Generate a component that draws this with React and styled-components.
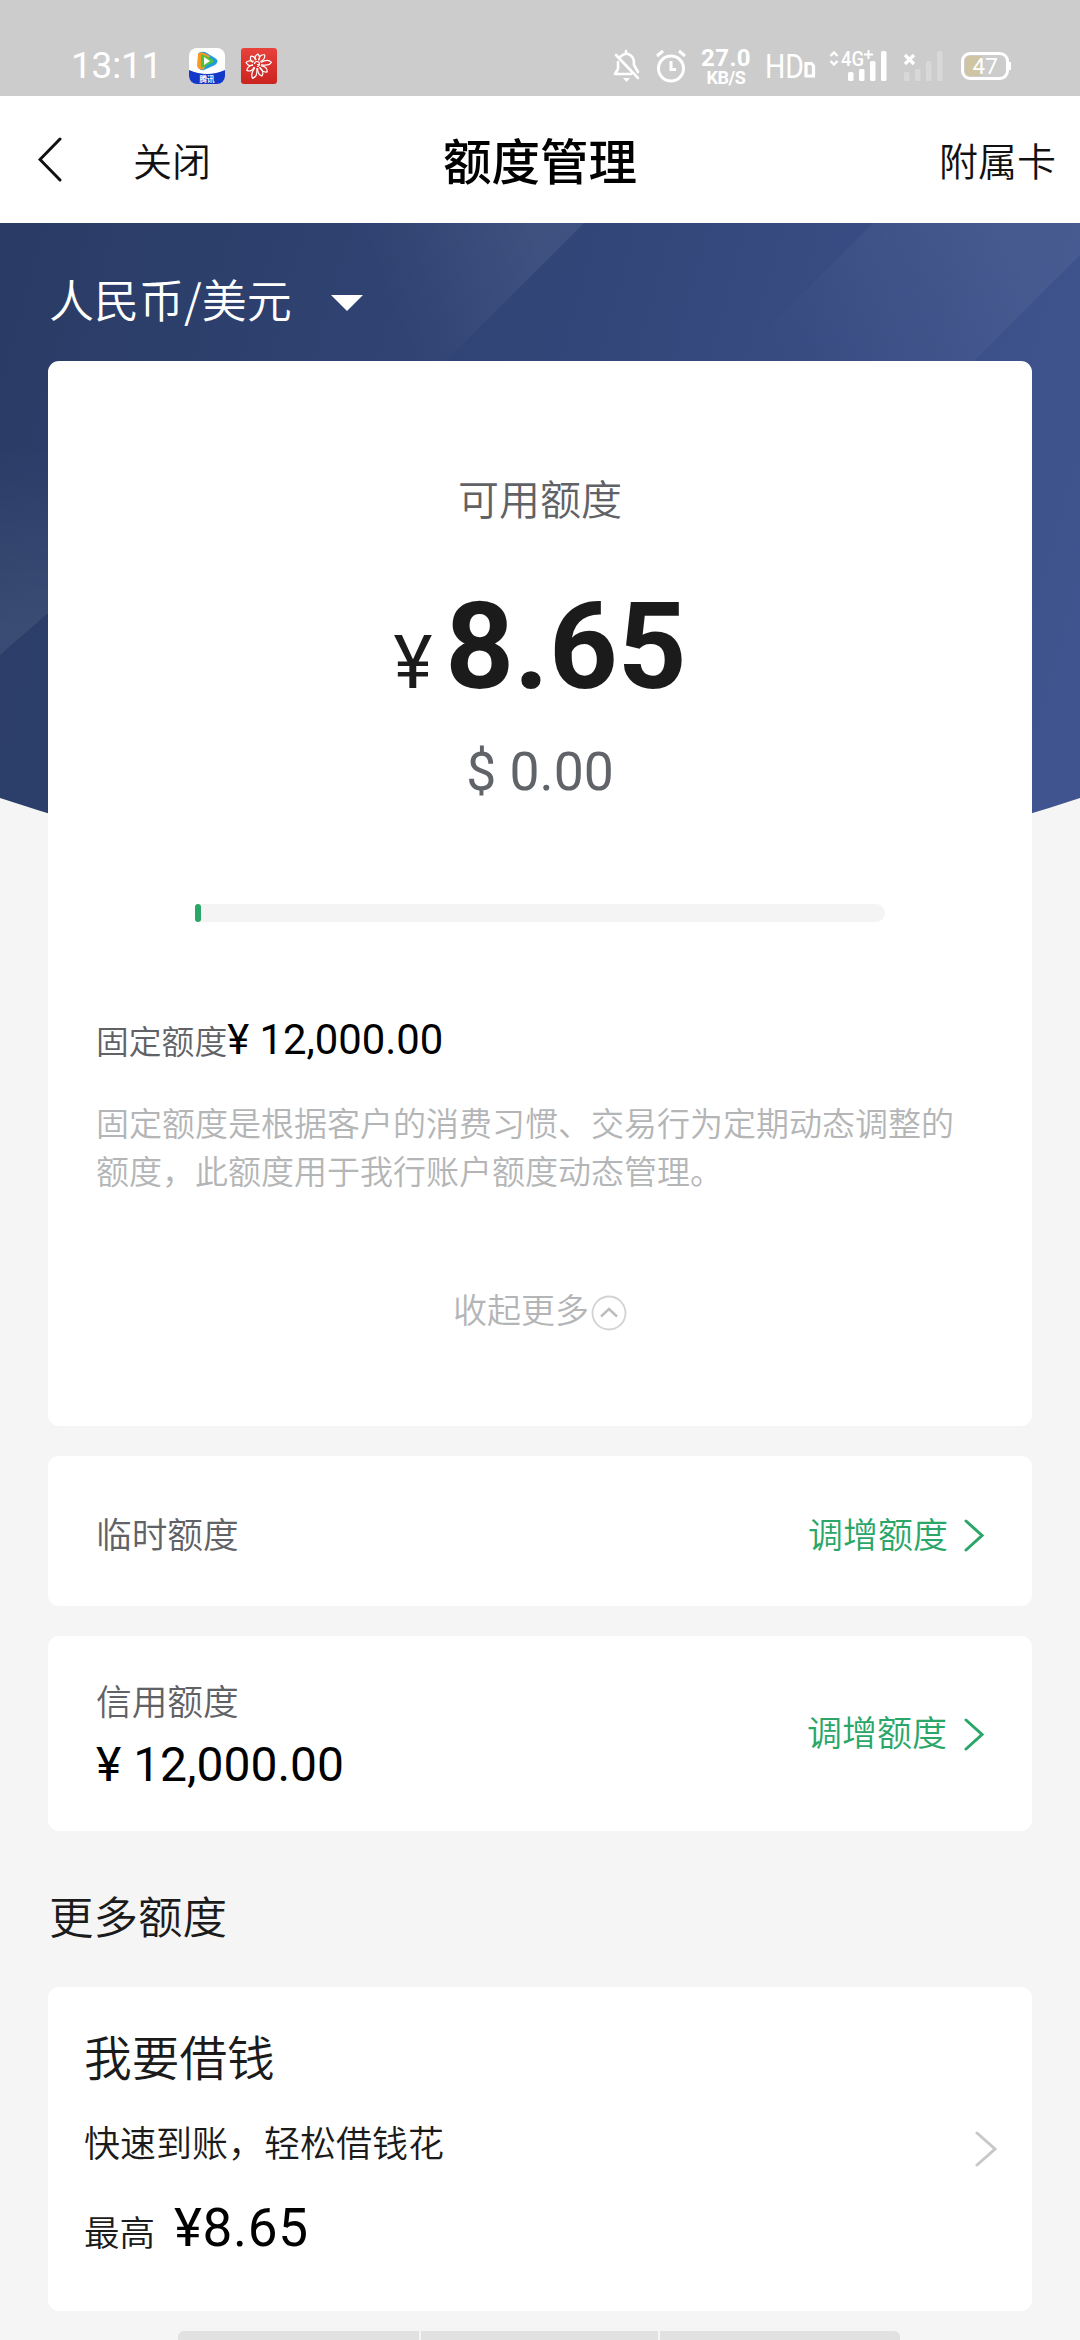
import React from "react";
import styled, { createGlobalStyle } from "styled-components";

const GlobalStyle = createGlobalStyle`
  * {
    box-sizing: border-box;
    margin: 0;
    padding: 0;
  }

  body {
    background: #f5f5f5;
    font-family: "Noto Sans CJK SC", sans-serif;
    font-weight: 350;
    color: #1b1b1b;
  }
`;

const Page = styled.div`
  width: 1080px;
  height: 2340px;
  overflow: hidden;
  display: flex;
  flex-direction: column;
  background: #f5f5f5;
`;

const StatusBar = styled.div`
  height: 96px;
  flex: none;
  padding: 48px 69px 0 71px;
  display: flex;
  justify-content: space-between;
  background: #cccccc;
  color: #fff;
  font-family: Roboto, sans-serif;
  font-weight: 400;

  svg {
    display: block;
    overflow: visible;
  }
`;

const StatusGroup = styled.div`
  display: flex;
  height: 36px;
`;

const Clock = styled.span`
  width: 118px;
  font-size: 37px;
  line-height: 36px;
  letter-spacing: -0.2px;
`;

const AppIcons = styled.div`
  display: flex;
  gap: 16px;
`;

const NavBar = styled.div`
  height: 127px;
  flex: none;
  padding: 0 24px 2px;
  display: grid;
  grid-template-columns: 1fr auto 1fr;
  align-items: center;
  background: #fff;
`;

const NavLeft = styled.div`
  padding-left: 14px;
  display: flex;
  align-items: center;
  gap: 71px;

  svg {
    margin-top: 2px;
  }
`;

const NavText = styled.span`
  font-size: 39px;
  line-height: 56px;
  color: #111;
  text-align: ${(props) => props.$align || "left"};
`;

const NavTitle = styled.h1`
  font-size: 48.5px;
  line-height: 60px;
  font-weight: 500;
  color: #000;
`;

const Content = styled.div`
  position: relative;
  flex: 1;
  padding: 0 48px;
  display: flex;
  flex-direction: column;
`;

const Backdrop = styled.svg`
  position: absolute;
  left: 0;
  top: 0;
`;

const Currency = styled.div`
  position: relative;
  height: 138px;
  padding-top: 21px;
  padding-left: 1px;
  display: flex;
  align-items: flex-start;
  gap: 39px;
  color: #fff;
  font-size: 45px;
  line-height: 110px;
`;

const Caret = styled.span`
  margin-top: 51px;
  border: 16px solid transparent;
  border-top-color: #fff;
  border-bottom: 0;
`;

const Card = styled.section`
  position: relative;
  flex: none;
  height: ${(props) => props.$height}px;
  margin-bottom: ${(props) => props.$gap || 0}px;
  padding: ${(props) => props.$padding || "0 48px"};
  border-radius: 11px;
  background: #fff;
`;

const Summary = styled.div`
  display: flex;
  flex-direction: column;
  align-items: center;
`;

const SummaryLabel = styled.div`
  font-size: 41px;
  line-height: 60px;
  color: #606266;
`;

const Balance = styled.div`
  margin-top: 50px;
  display: flex;
  align-items: baseline;
  gap: 13px;
  font-family: Roboto, sans-serif;
  font-size: 120px;
  font-weight: 700;
  line-height: 140px;

  small {
    font-size: 74px;
    font-weight: 400;
  }
`;

const Dollars = styled.div`
  margin-top: 4px;
  font-family: Roboto, sans-serif;
  font-size: 53.5px;
  font-weight: 400;
  line-height: 70px;
  color: #606469;
`;

const Track = styled.div`
  width: 690px;
  height: 18px;
  margin-top: 97px;
  border-radius: 3px 9px 9px 3px;
  background: #f4f4f4;
`;

const Fill = styled.div`
  height: 100%;
  border-radius: 3px;
  background: #2aa768;
`;

const Fixed = styled.div`
  margin-top: 88px;
  display: flex;
  align-items: baseline;
  font-size: 32.8px;
  line-height: 60px;
  color: #606266;
`;

const Money = styled.span`
  font-family: Roboto, sans-serif;
  font-size: ${(props) => props.$size}px;
  font-weight: 400;
  letter-spacing: ${(props) => props.$spacing || 0}px;
  color: #000;
`;

const Note = styled.p`
  margin-top: 28px;
  font-size: 33px;
  line-height: 48px;
  color: #b4b5b6;
  white-space: pre-line;
`;

const Collapse = styled.div`
  margin-top: 90px;
  display: flex;
  justify-content: center;
  align-items: center;
  gap: 2px;
  font-size: 34px;
  line-height: 50px;
  color: #b4b5b6;

  svg {
    margin-top: 7px;
  }
`;

const Row = styled.div`
  height: 100%;
  padding-top: ${(props) => props.$drop || 0}px;
  display: flex;
  justify-content: space-between;
  align-items: center;
`;

const RowLabel = styled.div`
  font-size: 35.7px;
  line-height: 54px;
  color: #606266;
`;

const Amount = styled.div`
  padding-top: 8px;
  line-height: 60px;
`;

const Action = styled.div`
  margin-bottom: ${(props) => props.$lift || 0}px;
  display: flex;
  align-items: center;
  gap: ${(props) => props.$gap}px;
  font-size: 35px;
  line-height: 54px;
  color: #2aa768;

  svg {
    margin-top: 6px;
  }
`;

const SectionTitle = styled.h2`
  height: 156px;
  padding: 51px 0 0 1px;
  font-size: 44.5px;
  line-height: 66px;
  font-weight: 350;
`;

const LoanInfo = styled.div`
  height: 100%;
  padding-top: 34px;
`;

const LoanTitle = styled.h3`
  font-size: 47.7px;
  line-height: 70px;
  font-weight: 350;
`;

const LoanText = styled.div`
  margin-top: 23px;
  font-size: 36px;
  line-height: 54px;
`;

const LoanMax = styled.div`
  margin-top: 28px;
  display: flex;
  align-items: baseline;
  gap: 19px;
  font-size: 35.5px;
  line-height: 64px;
`;

const BottomTabs = styled.div`
  width: 722px;
  height: 9px;
  margin: 20px 0 0 130px;
  display: grid;
  grid-template-columns: 241px 237px 1fr;
  gap: 2px;
`;

const BottomTab = styled.div`
  background: #e1e1e1;

  &:first-child {
    border-top-left-radius: 6px;
  }

  &:last-child {
    border-top-right-radius: 6px;
  }
`;

const Chevron = ({ width, height, color, stroke = 3, left }) => (
  <svg width={width} height={height} viewBox={`0 0 ${width} ${height}`} fill="none">
    <path
      d={
        left
          ? `M${width - 2} 2L2 ${height / 2}L${width - 2} ${height - 2}`
          : `M2 2L${width - 2} ${height / 2}L2 ${height - 2}`
      }
      stroke={color}
      strokeWidth={stroke}
      strokeLinecap="round"
    />
  </svg>
);

const VideoIcon = () => (
  <svg width="36" height="36" viewBox="0 0 36 36">
    <defs>
      <clipPath id="tile">
        <rect width="36" height="36" rx="8" />
      </clipPath>
    </defs>
    <g clipPath="url(#tile)">
      <rect width="36" height="36" fill="#fff" />
      <path d="M0 22Q18 30 36 22V36H0Z" fill="#1238c8" />
      <path d="M9 6Q11 3 16 4L26 10Q31 13 26 17L15 22Q10 23 9 18Z" fill="#1f9be0" />
      <path d="M9 6Q11 3 15 5L21 8L15 21Q10 23 8 18Z" fill="#f59a23" />
      <path d="M12 6L23 11Q26 13 23 15L12 20Z" fill="#4fc23c" />
      <path d="M15 9L21 13L15 17Z" fill="#fff" />
    </g>
    <text x="18" y="34" fontSize="7.5" fontWeight="700" fill="#fff" textAnchor="middle" fontFamily="Noto Sans CJK SC">
      腾讯
    </text>
  </svg>
);

const FlowerIcon = () => (
  <svg width="36" height="36" viewBox="0 0 36 36" fill="none">
    <defs>
      <linearGradient id="red" x1="0" y1="0" x2="0" y2="1">
        <stop offset="0" stopColor="#e8423c" />
        <stop offset="1" stopColor="#cb231f" />
      </linearGradient>
    </defs>
    <rect width="36" height="36" rx="3" fill="url(#red)" />
    <g stroke="#fff" strokeWidth="1.2" strokeLinejoin="round" transform="translate(16 16)">
      {[
        [5, 10],
        [40, 12],
        [84, 14.5],
        [128, 13],
        [158, 13],
        [197, 15],
        [238, 12],
        [278, 11],
        [322, 10],
      ].map(([angle, length]) => (
        <path key={angle} d={`M-1 -4Q-4.500 ${-length + 3} 0 ${-length}Q3.500 ${-length + 3} 1 -4`} transform={`rotate(${angle})`} />
      ))}
      <path d="M-2.500 0A2.500 2.500 0 1 1 0 2.500M0 0.500H2.500" />
    </g>
  </svg>
);

const Speed = styled.div`
  width: 50px;
  margin: 0 12px 0 2px;
  display: flex;
  flex-direction: column;
  align-items: center;
  font-weight: 700;
`;

const SpeedValue = styled.span`
  height: 20px;
  font-size: 24px;
  line-height: 20px;
  letter-spacing: 0.4px;
`;

const SpeedUnit = styled.span`
  height: 16px;
  font-size: 18px;
  line-height: 19px;
  letter-spacing: -0.4px;
`;

const AlertIcons = () => (
  <svg width="88" height="38" viewBox="0 0 88 38" fill="none" stroke="#fff">
    <g strokeWidth="2.6" strokeLinejoin="round" strokeLinecap="round">
      <path d="M9 9Q16 2 22 10Q23 12 23 17L27 24M20 26H4L7 21V14" />
      <path d="M5 7L27 30" />
      <path d="M15 3V5" />
    </g>
    <path d="M12 30H19L15.500 34Z" fill="#fff" stroke="none" />
    <circle cx="60" cy="20.500" r="12.500" strokeWidth="3" />
    <path d="M46 8L52 3M74 8L68 3" strokeWidth="3" />
    <path d="M60 13V21.500H65" strokeWidth="3" />
  </svg>
);

// HD mark, both SIM signals and the battery
const SignalIcons = () => (
  <svg width="248" height="38" viewBox="152 0 248 38" fill="none" stroke="#fff">
    <g fill="#fff" stroke="none" fontFamily="Roboto">
      <text x="154" y="30" fontSize="34" textLength="39" lengthAdjust="spacingAndGlyphs">HD</text>
      <text x="230" y="18" fontSize="21" fontWeight="500" textLength="23" lengthAdjust="spacingAndGlyphs">4G</text>
    </g>
    <path d="M257.500 2V11M253 6.500H262" strokeWidth="2" />
    <path d="M195 15.500H200.500L202.500 18V28H195Z" strokeWidth="3.200" />
    <path d="M219.500 8L223 4.500L226.500 8M219.500 13L223 16.500L226.500 13" strokeWidth="2.400" />
    <g fill="#fff" stroke="none">
      <rect x="237" y="24" width="5.500" height="9" rx="1.500" />
      <rect x="248" y="21" width="5.500" height="12" rx="1.500" />
      <rect x="259" y="13" width="5.500" height="20" rx="1.500" />
      <rect x="270" y="3" width="5.500" height="30" rx="1.500" />
    </g>
    <path d="M294 7L303 16M303 7L294 16" strokeWidth="3.200" />
    <g fill="#d8d8d8" stroke="none">
      <rect x="293" y="24" width="5.500" height="9" rx="1.500" />
      <rect x="304" y="21" width="5.500" height="12" rx="1.500" />
      <rect x="315" y="13" width="5.500" height="20" rx="1.500" />
      <rect x="326" y="3" width="5.500" height="30" rx="1.500" />
    </g>
    <path d="M359 8H371V28H359Q354 28 354 23V13Q354 8 359 8Z" fill="#cfc5a3" stroke="none" />
    <rect x="351.500" y="5.500" width="45" height="25" rx="7.500" strokeWidth="3" />
    <path d="M399 14V22" strokeWidth="2" />
    <text x="361.500" y="25.500" fontSize="22.500" fill="#fff" stroke="none" fontFamily="Roboto">47</text>
  </svg>
);

const HeroArt = () => (
  <Backdrop width="1080" height="620" viewBox="0 0 1080 620">
    <defs>
      <linearGradient id="base" gradientUnits="userSpaceOnUse" x1="0" y1="100" x2="1080" y2="400">
        <stop offset="0" stopColor="#2a3c65" />
        <stop offset="0.500" stopColor="#324679" />
        <stop offset="1" stopColor="#40548f" />
      </linearGradient>
      <linearGradient id="stripeA" gradientUnits="userSpaceOnUse" x1="380" y1="60" x2="530" y2="0">
        <stop offset="0" stopColor="#fff" stopOpacity="0" />
        <stop offset="1" stopColor="#fff" stopOpacity="0.065" />
      </linearGradient>
      <linearGradient id="stripeB" gradientUnits="userSpaceOnUse" x1="800" y1="160" x2="980" y2="0">
        <stop offset="0" stopColor="#fff" stopOpacity="0" />
        <stop offset="1" stopColor="#fff" stopOpacity="0.055" />
      </linearGradient>
      <linearGradient id="stripeC" gradientUnits="userSpaceOnUse" x1="0" y1="220" x2="0" y2="400">
        <stop offset="0" stopColor="#fff" stopOpacity="0" />
        <stop offset="1" stopColor="#fff" stopOpacity="0.070" />
      </linearGradient>
      <clipPath id="arc">
        <path d="M0 0H1080V575Q540 755 0 575Z" />
      </clipPath>
    </defs>
    <g clipPath="url(#arc)">
      <rect width="1080" height="620" fill="url(#base)" />
      <path d="M330 0H584L446 138H192Z" fill="url(#stripeA)" />
      <path d="M873 0H1080V32L974 138H735Z" fill="url(#stripeB)" />
      <path d="M0 220H48V390L0 432Z" fill="url(#stripeC)" />
    </g>
  </Backdrop>
);

const App = () => {
  return (
    <>
      <GlobalStyle />
      <Page>
        <StatusBar>
          <StatusGroup>
            <Clock>13:11</Clock>
            <AppIcons>
              <VideoIcon />
              <FlowerIcon />
            </AppIcons>
          </StatusGroup>
          <StatusGroup>
            <AlertIcons />
            <Speed>
              <SpeedValue>27.0</SpeedValue>
              <SpeedUnit>KB/S</SpeedUnit>
            </Speed>
            <SignalIcons />
          </StatusGroup>
        </StatusBar>
        <NavBar>
          <NavLeft>
            <Chevron width={24} height={45} color="#111" stroke={3} left />
            <NavText>关闭</NavText>
          </NavLeft>
          <NavTitle>额度管理</NavTitle>
          <NavText $align="right">附属卡</NavText>
        </NavBar>
        <Content>
          <HeroArt />
          <Currency>
            人民币/美元
            <Caret />
          </Currency>
          <Card $height={1065} $gap={30} $padding="106px 48px 0">
            <Summary>
              <SummaryLabel>可用额度</SummaryLabel>
              <Balance>
                <small>¥</small>8.65
              </Balance>
              <Dollars>$ 0.00</Dollars>
              <Track>
                <Fill style={{ width: `${(8.65 / 12000) * 100 + 0.8}%` }} />
              </Track>
            </Summary>
            <Fixed>
              固定额度<Money $size={41.8}>¥ 12,000.00</Money>
            </Fixed>
            <Note>
              {"固定额度是根据客户的消费习惯、交易行为定期动态调整的\n额度，此额度用于我行账户额度动态管理。"}
            </Note>
            <Collapse>
              收起更多
              <svg width="36" height="36" viewBox="0 0 36 36" fill="none">
                <circle cx="18" cy="18" r="16.500" stroke="#d3d3d3" strokeWidth="1.800" />
                <path d="M10 21.500L18 14L26 21.500" stroke="#bdbdbd" strokeWidth="2.400" />
              </svg>
            </Collapse>
          </Card>
          <Card $height={150} $gap={30}>
            <Row $drop={3}>
              <RowLabel>临时额度</RowLabel>
              <Action $gap={16}>
                调增额度
                <Chevron width={20} height={33} color="#2aa768" />
              </Action>
            </Row>
          </Card>
          <Card $height={195}>
            <Row $drop={9}>
              <div>
                <RowLabel>信用额度</RowLabel>
                <Amount>
                  <Money $size={48}>¥ 12,000.00</Money>
                </Amount>
              </div>
              <Action $gap={17} $lift={14}>
                调增额度
                <Chevron width={20} height={33} color="#2aa768" />
              </Action>
            </Row>
          </Card>
          <SectionTitle>更多额度</SectionTitle>
          <Card $height={324} $padding="0 35px 0 36px">
            <Row>
              <LoanInfo>
                <LoanTitle>我要借钱</LoanTitle>
                <LoanText>快速到账，轻松借钱花</LoanText>
                <LoanMax>
                  最高
                  <Money $size={53} $spacing={0.7}>
                    ¥8.65
                  </Money>
                </LoanMax>
              </LoanInfo>
              <Chevron width={22} height={36} color="#c6c8ca" />
            </Row>
          </Card>
          <BottomTabs>
            <BottomTab />
            <BottomTab />
            <BottomTab />
          </BottomTabs>
        </Content>
      </Page>
    </>
  );
};

export default App;
